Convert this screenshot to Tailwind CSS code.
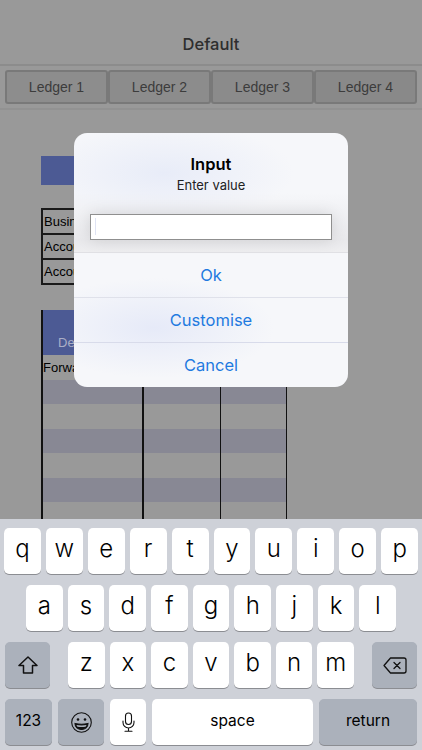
<!DOCTYPE html>
<html lang="en">
<head>
  <meta charset="UTF-8" />
  <meta name="viewport" content="width=device-width, initial-scale=1.0"/>
  <title>Default</title>
  <script src="https://cdn.jsdelivr.net/npm/@tailwindcss/browser@4"></script>
</head>
<body class="relative w-[422px] h-[750px] overflow-hidden bg-[#999999] font-['Liberation_Sans',sans-serif]">

  <!-- Page behind the alert -->
  <main class="h-[519px] overflow-hidden">
    <header class="h-[66px] pt-[34px] border-b-2 border-[#8c8c8c] text-center font-['Inter',sans-serif] text-[16.5px] leading-5 font-medium text-[#2e2e2e]">Default</header>

    <nav class="h-[44px] px-[5px] pt-[4px] border-b-2 border-[#929292]">
      <div class="flex h-[34px]">
        <div class="flex-1 flex items-center justify-center bg-[#8d8d8d] border-2 border-[#797979] rounded-[3px] text-[14px] text-[#3c3c3c]">Ledger 1</div>
        <div class="flex-1 flex items-center justify-center bg-[#8c8c8c] border-2 border-[#797979] rounded-[3px] text-[14px] text-[#3c3c3c]">Ledger 2</div>
        <div class="flex-1 flex items-center justify-center bg-[#8b8b8b] border-2 border-[#797979] rounded-[3px] text-[14px] text-[#3c3c3c]">Ledger 3</div>
        <div class="flex-1 flex items-center justify-center bg-[#898989] border-2 border-[#797979] rounded-[3px] text-[14px] text-[#3c3c3c]">Ledger 4</div>
      </div>
    </nav>

    <section class="ml-[41px] w-[245px] pt-[46px]">
      <div class="h-[29px] bg-[#4c5a94]"></div>

      <div class="mt-[23px] border-2 border-[#1a1a1a] text-[13px] leading-[23px] text-black">
        <div class="h-[25px] pl-[1px] border-b-2 border-[#1a1a1a]">Business</div>
        <div class="h-[25px] pl-[1px] border-b-2 border-[#1a1a1a]">Account</div>
        <div class="h-[23px] pl-[1px]">Account</div>
      </div>

      <!-- Ledger table -->
      <div class="relative mt-[25px] h-[209px]">
        <div class="h-[45px] bg-[#4c5a94] pl-[17px] pt-[25px] text-[13px] leading-4 text-[#a9aec6]">Description</div>
        <div class="h-[25px] pl-[2px] text-[13px] leading-[25px] text-black">Forward</div>
        <div class="h-[24px] bg-[#888894]"></div>
        <div class="h-[25px]"></div>
        <div class="h-[24px] bg-[#888894]"></div>
        <div class="h-[25px]"></div>
        <div class="h-[24px] bg-[#888894]"></div>
        <div class="absolute inset-y-0 left-0 w-[1.5px] bg-[#111]"></div>
        <div class="absolute inset-y-0 left-[101px] w-[1.5px] bg-[#111]"></div>
        <div class="absolute inset-y-0 left-[178.5px] w-[1.5px] bg-[#111]"></div>
        <div class="absolute inset-y-0 left-[244.5px] w-[1.5px] bg-[#111]"></div>
      </div>
    </section>
  </main>

  <!-- Keyboard -->
  <div class="h-[231px] bg-[#ced1d8] pt-[9px] font-['Inter',sans-serif] font-light text-black">
    <div class="flex gap-[5px] px-[4px] h-[46px] text-[24px]">
      <div class="flex-1 flex items-center justify-center pb-[5px] bg-white rounded-[5px] shadow-[0_1px_0_#8b8d92]">q</div>
      <div class="flex-1 flex items-center justify-center pb-[5px] bg-white rounded-[5px] shadow-[0_1px_0_#8b8d92]">w</div>
      <div class="flex-1 flex items-center justify-center pb-[5px] bg-white rounded-[5px] shadow-[0_1px_0_#8b8d92]">e</div>
      <div class="flex-1 flex items-center justify-center pb-[5px] bg-white rounded-[5px] shadow-[0_1px_0_#8b8d92]">r</div>
      <div class="flex-1 flex items-center justify-center pb-[5px] bg-white rounded-[5px] shadow-[0_1px_0_#8b8d92]">t</div>
      <div class="flex-1 flex items-center justify-center pb-[5px] bg-white rounded-[5px] shadow-[0_1px_0_#8b8d92]">y</div>
      <div class="flex-1 flex items-center justify-center pb-[5px] bg-white rounded-[5px] shadow-[0_1px_0_#8b8d92]">u</div>
      <div class="flex-1 flex items-center justify-center pb-[5px] bg-white rounded-[5px] shadow-[0_1px_0_#8b8d92]">i</div>
      <div class="flex-1 flex items-center justify-center pb-[5px] bg-white rounded-[5px] shadow-[0_1px_0_#8b8d92]">o</div>
      <div class="flex-1 flex items-center justify-center pb-[5px] bg-white rounded-[5px] shadow-[0_1px_0_#8b8d92]">p</div>
    </div>
    <div class="flex gap-[5px] px-[26px] mt-[11px] h-[46px] text-[24px]">
      <div class="flex-1 flex items-center justify-center pb-[5px] bg-white rounded-[5px] shadow-[0_1px_0_#8b8d92]">a</div>
      <div class="flex-1 flex items-center justify-center pb-[5px] bg-white rounded-[5px] shadow-[0_1px_0_#8b8d92]">s</div>
      <div class="flex-1 flex items-center justify-center pb-[5px] bg-white rounded-[5px] shadow-[0_1px_0_#8b8d92]">d</div>
      <div class="flex-1 flex items-center justify-center pb-[5px] bg-white rounded-[5px] shadow-[0_1px_0_#8b8d92]">f</div>
      <div class="flex-1 flex items-center justify-center pb-[5px] bg-white rounded-[5px] shadow-[0_1px_0_#8b8d92]">g</div>
      <div class="flex-1 flex items-center justify-center pb-[5px] bg-white rounded-[5px] shadow-[0_1px_0_#8b8d92]">h</div>
      <div class="flex-1 flex items-center justify-center pb-[5px] bg-white rounded-[5px] shadow-[0_1px_0_#8b8d92]">j</div>
      <div class="flex-1 flex items-center justify-center pb-[5px] bg-white rounded-[5px] shadow-[0_1px_0_#8b8d92]">k</div>
      <div class="flex-1 flex items-center justify-center pb-[5px] bg-white rounded-[5px] shadow-[0_1px_0_#8b8d92]">l</div>
    </div>
    <div class="flex px-[5px] mt-[11px] h-[46px] text-[24px]">
      <div class="w-[45px] flex items-center justify-center bg-[#abb1bb] rounded-[5px] shadow-[0_1px_0_#8b8d92]">
        <svg class="w-[20px] h-[18px]" viewBox="0 0 20 18" fill="none" stroke="#111" stroke-width="1.5" stroke-linejoin="round"><path d="M10 1 1 9.5h4.5V17h9V9.5H19z"/></svg>
      </div>
      <div class="flex-1 flex gap-[5px] mx-[18px]">
        <div class="flex-1 flex items-center justify-center pb-[5px] bg-white rounded-[5px] shadow-[0_1px_0_#8b8d92]">z</div>
        <div class="flex-1 flex items-center justify-center pb-[5px] bg-white rounded-[5px] shadow-[0_1px_0_#8b8d92]">x</div>
        <div class="flex-1 flex items-center justify-center pb-[5px] bg-white rounded-[5px] shadow-[0_1px_0_#8b8d92]">c</div>
        <div class="flex-1 flex items-center justify-center pb-[5px] bg-white rounded-[5px] shadow-[0_1px_0_#8b8d92]">v</div>
        <div class="flex-1 flex items-center justify-center pb-[5px] bg-white rounded-[5px] shadow-[0_1px_0_#8b8d92]">b</div>
        <div class="flex-1 flex items-center justify-center pb-[5px] bg-white rounded-[5px] shadow-[0_1px_0_#8b8d92]">n</div>
        <div class="flex-1 flex items-center justify-center pb-[5px] bg-white rounded-[5px] shadow-[0_1px_0_#8b8d92]">m</div>
      </div>
      <div class="w-[45px] flex items-center justify-center bg-[#abb1bb] rounded-[5px] shadow-[0_1px_0_#8b8d92]">
        <svg class="w-[24px] h-[17px]" viewBox="0 0 24 17" fill="none" stroke="#111" stroke-width="1.3" stroke-linejoin="round" stroke-linecap="round"><path d="M7.5 1H21a2 2 0 0 1 2 2v11a2 2 0 0 1-2 2H7.5L1 8.5z"/><path d="m11 5.5 6 6M17 5.5l-6 6"/></svg>
      </div>
    </div>
    <div class="flex gap-[6px] pl-[5px] pr-[5px] mt-[11px] h-[46px] text-[15.5px] font-normal">
      <div class="w-[47px] flex items-center justify-center pb-[2px] bg-[#abb1bb] rounded-[5px] shadow-[0_1px_0_#8b8d92]">123</div>
      <div class="w-[46px] flex items-center justify-center bg-[#abb1bb] rounded-[5px] shadow-[0_1px_0_#8b8d92]">
        <svg class="w-[21px] h-[21px]" viewBox="0 0 21 21" fill="none" stroke="#111" stroke-width="1.1"><circle cx="10.5" cy="10.5" r="9.8"/><circle cx="7" cy="7.5" r="1.3" fill="#111" stroke="none"/><circle cx="14" cy="7.5" r="1.3" fill="#111" stroke="none"/><path d="M4 11.5c4 .9 9 .9 13 0 0 3.800-3 6-6.500 6S4 15.300 4 11.500z" fill="#111"/><path d="M5.500 13c3 .6 7 .6 10 0-.2.800-.5 1.300-1 1.700-2.500.4-5.500.4-8 0-.5-.4-.8-.9-1-1.700z" fill="#abb1bb" stroke="none"/></svg>
      </div>
      <div class="w-[36px] flex items-center justify-center bg-white rounded-[5px] shadow-[0_1px_0_#8b8d92]">
        <svg class="w-[13px] h-[20px]" viewBox="0 0 13 20" fill="none" stroke="#111" stroke-width="1.1" stroke-linecap="round"><rect x="3.500" y="1" width="6" height="11.500" rx="3"/><path d="M1 9v1.500a5.500 5.500 0 0 0 11 0V9M6.500 16v3M3 19.300h7"/></svg>
      </div>
      <div class="w-[161px] flex items-center justify-center pb-[2px] bg-white rounded-[5px] shadow-[0_1px_0_#8b8d92]">space</div>
      <div class="flex-1 flex items-center justify-center pb-[2px] bg-[#abb1bb] rounded-[5px] shadow-[0_1px_0_#8b8d92]">return</div>
    </div>
  </div>

  <!-- Alert, sits over the page -->
  <div class="absolute left-[74px] top-[133px] w-[274px] h-[254px] rounded-[13px] overflow-hidden font-['Inter',sans-serif] bg-[#f6f7fa] bg-[radial-gradient(ellipse_130px_50px_at_90px_40px,#e8ecf8,transparent),radial-gradient(ellipse_120px_50px_at_80px_195px,#e6eaf8,transparent)]">
    <div class="h-[119px] pt-[21px] text-center bg-[linear-gradient(to_bottom,transparent_50%,#e9e9ec_90%,#eeeef0)]">
      <h2 class="text-[16.5px] leading-5 font-semibold text-black">Input</h2>
      <p class="mt-[3px] text-[13px] leading-4 text-[#222]">Enter value</p>
      <div class="mx-[16px] mt-[21px] h-[26px] bg-white border border-[#8f8f8f] shadow-[0_0_16px_rgba(0,0,0,0.12)]">
        <div class="mt-[3px] ml-[4px] w-px h-[17px] bg-[#dfe3f3]"></div>
      </div>
    </div>
    <div class="h-[45px] flex items-center justify-center border-t border-[#e0e0e4] text-[16.5px] text-[#1f7ae0]">Ok</div>
    <div class="h-[45px] flex items-center justify-center border-t border-[#dfe1ea] text-[16.5px] text-[#1f7ae0]">Customise</div>
    <div class="h-[45px] flex items-center justify-center border-t border-[#d8dbea] text-[16.5px] text-[#1f7ae0]">Cancel</div>
  </div>
</body>
</html>
